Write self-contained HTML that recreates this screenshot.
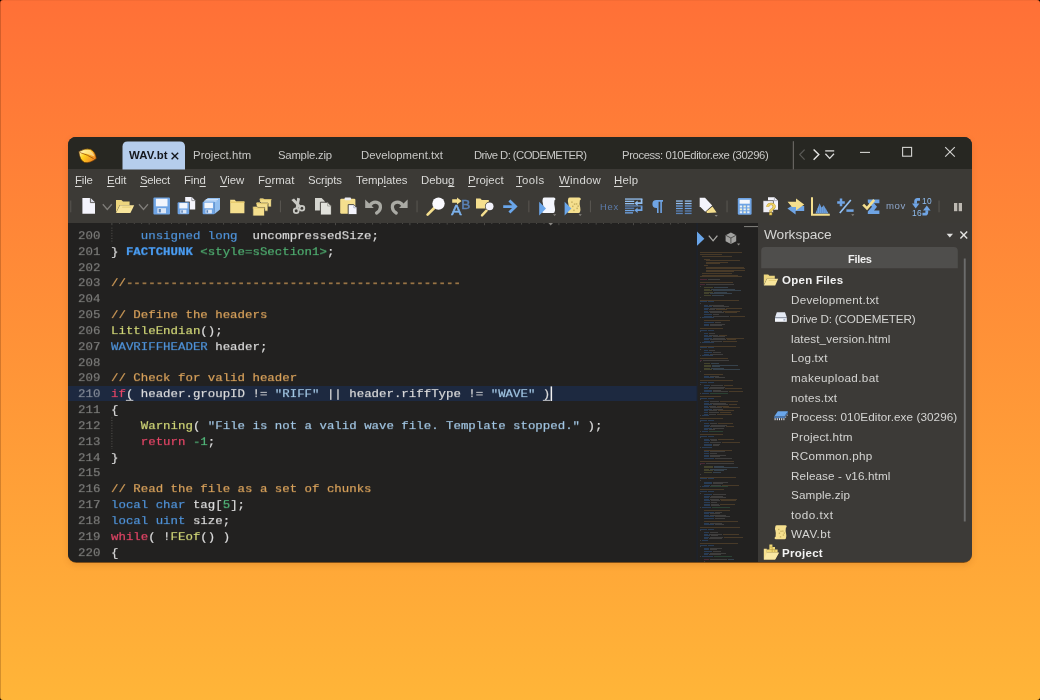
<!DOCTYPE html>
<html><head><meta charset="utf-8"><title>010 Editor</title>
<style>
html,body{margin:0;padding:0;}
body{width:1040px;height:700px;overflow:hidden;position:relative;background:#000;font-family:"Liberation Sans",sans-serif;}
.bg{position:absolute;left:0;top:0;width:1040px;height:700px;border-radius:3px;background:linear-gradient(180deg,rgb(255,112,55) 0%,rgb(255,181,56) 100%);}
.frame{position:absolute;left:67.6px;top:136.6px;width:904.5px;height:426.2px;border-radius:8.4px;background:rgba(40,18,4,.6);box-shadow:0 2px 6px rgba(130,60,0,.16);}
.clip{position:absolute;left:68px;top:137px;width:903.7px;height:425.4px;border-radius:8px;overflow:hidden;background:#3c3a37;}
.page{position:absolute;left:-68px;top:-137px;width:1040px;height:700px;}
.t,.ln,.cl{will-change:transform;}
.abs{position:absolute;}
.t{position:absolute;white-space:pre;line-height:20px;height:20px;font-family:"Liberation Sans",sans-serif;}
.t u{text-decoration:underline;text-underline-offset:1.5px;text-decoration-thickness:1px;}
.ln,.cl{position:absolute;white-space:pre;font-family:"Liberation Mono",monospace;font-size:12.4px;line-height:15.83px;height:15.83px;letter-spacing:0.0088px;}
.ln{left:77.6px;color:#7c7c7a;}
.ln,.cl{transform:scaleY(.885);transform-origin:0 11.21px;}
.cl{left:110.80px;color:#dcdcdc;}
.cl b{font-weight:700;}
.cl,.ln{-webkit-text-stroke:0.22px currentColor;}
.bm{text-decoration:underline;text-underline-offset:2.6px;text-decoration-thickness:1.1px;}
.mm{filter:blur(.3px);}
.mm i{position:absolute;height:1px;display:block;opacity:.5;}
svg{position:absolute;left:0;top:0;overflow:visible;}
</style></head><body>
<div class="bg"></div>
<div class="abs" style="left:0;top:0;width:1px;height:700px;background:rgba(60,20,0,.22);"></div>
<div class="abs" style="left:0;top:0;width:1040px;height:1px;background:rgba(60,20,0,.05);"></div>
<div class="frame"></div>
<div class="clip"><div class="page">
  <div class="abs" style="left:68px;top:137px;width:904px;height:32.4px;background:#272722;"></div>
  <div class="abs" style="left:68px;top:169.4px;width:904px;height:53.6px;background:#3c3a36;"></div>
  <div class="abs" style="left:68px;top:223.2px;width:690px;height:340px;background:#222120;"></div>
  <div class="abs" style="left:68px;top:385.5px;width:629px;height:15.3px;background:#1d2940;"></div>
  <div class="ln" style="top:228.90px;">200</div>
<div class="cl" style="top:228.90px">    <span style="color:#4f93da">unsigned long</span>  uncompressedSize;</div>
<div class="ln" style="top:244.73px;">201</div>
<div class="cl" style="top:244.73px">} <b style="color:#4a9df3">FACTCHUNK</b> <span style="color:#4fae70">&lt;style=sSection1&gt;</span>;</div>
<div class="ln" style="top:260.56px;">202</div>
<div class="ln" style="top:276.39px;">203</div>
<div class="cl" style="top:276.39px"><span style="color:#d9a25b">//---------------------------------------------</span></div>
<div class="ln" style="top:292.22px;">204</div>
<div class="ln" style="top:308.05px;">205</div>
<div class="cl" style="top:308.05px"><span style="color:#d9a25b">// Define the headers</span></div>
<div class="ln" style="top:323.88px;">206</div>
<div class="cl" style="top:323.88px"><span style="color:#cfd576">LittleEndian</span>();</div>
<div class="ln" style="top:339.71px;">207</div>
<div class="cl" style="top:339.71px"><span style="color:#4f93da">WAVRIFFHEADER</span> header;</div>
<div class="ln" style="top:355.54px;">208</div>
<div class="ln" style="top:371.37px;">209</div>
<div class="cl" style="top:371.37px"><span style="color:#d9a25b">// Check for valid header</span></div>
<div class="ln" style="top:387.20px;color:#838a96">210</div>
<div class="cl" style="top:387.20px"><span style="color:#e44566">if</span><span class="bm">(</span> header.groupID != <span style="color:#a2c6e3">"RIFF"</span> || header.riffType != <span style="color:#a2c6e3">"WAVE"</span> <span class="bm">)</span></div>
<div class="ln" style="top:403.03px;">211</div>
<div class="cl" style="top:403.03px">{</div>
<div class="ln" style="top:418.86px;">212</div>
<div class="cl" style="top:418.86px">    <span style="color:#cfd576">Warning</span>( <span style="color:#a2c6e3">"File is not a valid wave file. Template stopped."</span> );</div>
<div class="ln" style="top:434.69px;">213</div>
<div class="cl" style="top:434.69px">    <span style="color:#e44566">return</span> <span style="color:#52b87a">-1</span>;</div>
<div class="ln" style="top:450.52px;">214</div>
<div class="cl" style="top:450.52px">}</div>
<div class="ln" style="top:466.35px;">215</div>
<div class="ln" style="top:482.18px;">216</div>
<div class="cl" style="top:482.18px"><span style="color:#d9a25b">// Read the file as a set of chunks</span></div>
<div class="ln" style="top:498.01px;">217</div>
<div class="cl" style="top:498.01px"><span style="color:#4f93da">local char</span> tag[<span style="color:#52b87a">5</span>];</div>
<div class="ln" style="top:513.84px;">218</div>
<div class="cl" style="top:513.84px"><span style="color:#4f93da">local uint</span> size;</div>
<div class="ln" style="top:529.67px;">219</div>
<div class="cl" style="top:529.67px"><span style="color:#e44566">while</span>( !<span style="color:#cfd576">FEof</span>() )</div>
<div class="ln" style="top:545.50px;">220</div>
<div class="cl" style="top:545.50px">{</div>
  <div class="mm"><i style="left:699.6px;top:252.40px;width:42.8px;background:#6e5330"></i><i style="left:699.6px;top:253.98px;width:22.4px;background:#6e5330"></i><i style="left:701.6px;top:255.56px;width:30.6px;background:#6e5330"></i><i style="left:703.7px;top:258.72px;width:6.1px;background:#6e5330"></i><i style="left:705.7px;top:260.30px;width:34.7px;background:#6e5330"></i><i style="left:705.7px;top:261.88px;width:22.4px;background:#6e5330"></i><i style="left:705.7px;top:263.46px;width:14.3px;background:#6e5330"></i><i style="left:703.7px;top:265.04px;width:4.1px;background:#6e5330"></i><i style="left:705.7px;top:266.62px;width:38.8px;background:#6e5330"></i><i style="left:705.7px;top:268.20px;width:39.3px;background:#6e5330"></i><i style="left:705.7px;top:269.78px;width:39.3px;background:#6e5330"></i><i style="left:705.7px;top:271.36px;width:28.6px;background:#6e5330"></i><i style="left:701.6px;top:272.94px;width:30.6px;background:#6e5330"></i><i style="left:701.6px;top:274.52px;width:36.7px;background:#6e5330"></i><i style="left:699.6px;top:276.10px;width:42.8px;background:#6e5330"></i><i style="left:699.6px;top:279.26px;width:7.1px;background:#70324a"></i><i style="left:707.8px;top:279.26px;width:12.2px;background:#5c5c5a"></i><i style="left:699.6px;top:282.42px;width:33.7px;background:#6e5330"></i><i style="left:699.6px;top:284.00px;width:5.1px;background:#70324a"></i><i style="left:705.7px;top:284.00px;width:28.6px;background:#5c5c5a"></i><i style="left:699.6px;top:285.58px;width:1.0px;background:#5c5c5a"></i><i style="left:703.7px;top:287.16px;width:9.2px;background:#63663a"></i><i style="left:713.9px;top:287.16px;width:14.3px;background:#4a6478"></i><i style="left:703.7px;top:288.74px;width:6.1px;background:#63663a"></i><i style="left:710.8px;top:288.74px;width:24.5px;background:#4a6478"></i><i style="left:703.7px;top:290.32px;width:8.2px;background:#63663a"></i><i style="left:712.9px;top:290.32px;width:28.6px;background:#4a6478"></i><i style="left:703.7px;top:291.90px;width:9.2px;background:#63663a"></i><i style="left:713.9px;top:291.90px;width:13.3px;background:#4a6478"></i><i style="left:703.7px;top:293.48px;width:5.1px;background:#63663a"></i><i style="left:709.8px;top:293.48px;width:22.4px;background:#4a6478"></i><i style="left:703.7px;top:295.06px;width:7.1px;background:#63663a"></i><i style="left:711.8px;top:295.06px;width:12.2px;background:#4a6478"></i><i style="left:699.6px;top:296.64px;width:1.0px;background:#5c5c5a"></i><i style="left:699.6px;top:299.80px;width:39.8px;background:#6e5330"></i><i style="left:699.6px;top:301.38px;width:7.1px;background:#2f5788"></i><i style="left:707.8px;top:301.38px;width:6.1px;background:#2f5788"></i><i style="left:699.6px;top:302.96px;width:1.0px;background:#5c5c5a"></i><i style="left:703.7px;top:304.54px;width:4.1px;background:#2f5788"></i><i style="left:708.8px;top:304.54px;width:15.3px;background:#5c5c5a"></i><i style="left:703.7px;top:306.12px;width:8.2px;background:#2f5788"></i><i style="left:712.9px;top:306.12px;width:16.3px;background:#5c5c5a"></i><i style="left:703.7px;top:307.70px;width:5.1px;background:#2f5788"></i><i style="left:709.8px;top:307.70px;width:15.3px;background:#5c5c5a"></i><i style="left:726.1px;top:307.70px;width:16.3px;background:#6e5330"></i><i style="left:703.7px;top:309.28px;width:4.1px;background:#2f5788"></i><i style="left:708.8px;top:309.28px;width:6.1px;background:#5c5c5a"></i><i style="left:715.9px;top:309.28px;width:11.2px;background:#6e5330"></i><i style="left:703.7px;top:310.86px;width:4.1px;background:#2f5788"></i><i style="left:708.8px;top:310.86px;width:13.3px;background:#5c5c5a"></i><i style="left:723.1px;top:310.86px;width:17.3px;background:#6e5330"></i><i style="left:703.7px;top:312.44px;width:5.1px;background:#2f5788"></i><i style="left:709.8px;top:312.44px;width:14.3px;background:#5c5c5a"></i><i style="left:725.1px;top:312.44px;width:12.2px;background:#6e5330"></i><i style="left:703.7px;top:314.02px;width:8.2px;background:#2f5788"></i><i style="left:712.9px;top:314.02px;width:6.1px;background:#5c5c5a"></i><i style="left:703.7px;top:315.60px;width:8.2px;background:#2f5788"></i><i style="left:712.9px;top:315.60px;width:16.3px;background:#5c5c5a"></i><i style="left:730.2px;top:315.60px;width:14.8px;background:#6e5330"></i><i style="left:699.6px;top:317.18px;width:1.0px;background:#5c5c5a"></i><i style="left:701.6px;top:317.18px;width:12.2px;background:#2f5788"></i><i style="left:703.7px;top:320.34px;width:26.5px;background:#6e5330"></i><i style="left:703.7px;top:321.92px;width:10.2px;background:#2f5788"></i><i style="left:714.9px;top:321.92px;width:6.1px;background:#5c5c5a"></i><i style="left:703.7px;top:323.50px;width:5.1px;background:#2f5788"></i><i style="left:709.8px;top:323.50px;width:15.3px;background:#5c5c5a"></i><i style="left:703.7px;top:325.08px;width:5.1px;background:#2f5788"></i><i style="left:709.8px;top:325.08px;width:12.2px;background:#5c5c5a"></i><i style="left:699.6px;top:328.24px;width:23.5px;background:#6e5330"></i><i style="left:699.6px;top:329.82px;width:7.1px;background:#2f5788"></i><i style="left:707.8px;top:329.82px;width:6.1px;background:#2f5788"></i><i style="left:699.6px;top:331.40px;width:1.0px;background:#5c5c5a"></i><i style="left:703.7px;top:332.98px;width:4.1px;background:#2f5788"></i><i style="left:708.8px;top:332.98px;width:6.1px;background:#5c5c5a"></i><i style="left:703.7px;top:334.56px;width:4.1px;background:#2f5788"></i><i style="left:708.8px;top:334.56px;width:9.2px;background:#5c5c5a"></i><i style="left:719.0px;top:334.56px;width:8.2px;background:#6e5330"></i><i style="left:703.7px;top:336.14px;width:8.2px;background:#2f5788"></i><i style="left:712.9px;top:336.14px;width:12.2px;background:#5c5c5a"></i><i style="left:703.7px;top:337.72px;width:8.2px;background:#2f5788"></i><i style="left:712.9px;top:337.72px;width:12.2px;background:#5c5c5a"></i><i style="left:726.1px;top:337.72px;width:18.4px;background:#6e5330"></i><i style="left:703.7px;top:339.30px;width:5.1px;background:#2f5788"></i><i style="left:709.8px;top:339.30px;width:16.3px;background:#5c5c5a"></i><i style="left:727.1px;top:339.30px;width:9.2px;background:#6e5330"></i><i style="left:703.7px;top:340.88px;width:6.1px;background:#2f5788"></i><i style="left:710.8px;top:340.88px;width:11.2px;background:#5c5c5a"></i><i style="left:723.1px;top:340.88px;width:14.3px;background:#6e5330"></i><i style="left:699.6px;top:342.46px;width:1.0px;background:#5c5c5a"></i><i style="left:701.6px;top:342.46px;width:12.2px;background:#2f5788"></i><i style="left:699.6px;top:345.62px;width:36.7px;background:#6e5330"></i><i style="left:699.6px;top:347.20px;width:7.1px;background:#2f5788"></i><i style="left:707.8px;top:347.20px;width:6.1px;background:#2f5788"></i><i style="left:699.6px;top:348.78px;width:1.0px;background:#5c5c5a"></i><i style="left:703.7px;top:350.36px;width:4.1px;background:#2f5788"></i><i style="left:708.8px;top:350.36px;width:6.1px;background:#5c5c5a"></i><i style="left:703.7px;top:351.94px;width:8.2px;background:#2f5788"></i><i style="left:712.9px;top:351.94px;width:8.2px;background:#5c5c5a"></i><i style="left:703.7px;top:353.52px;width:5.1px;background:#2f5788"></i><i style="left:709.8px;top:353.52px;width:13.3px;background:#5c5c5a"></i><i style="left:699.6px;top:355.10px;width:1.0px;background:#5c5c5a"></i><i style="left:701.6px;top:355.10px;width:11.2px;background:#2f5788"></i><i style="left:699.6px;top:358.26px;width:28.6px;background:#6e5330"></i><i style="left:699.6px;top:359.84px;width:2.0px;background:#70324a"></i><i style="left:702.7px;top:359.84px;width:26.5px;background:#5c5c5a"></i><i style="left:699.6px;top:361.42px;width:1.0px;background:#5c5c5a"></i><i style="left:703.7px;top:363.00px;width:6.1px;background:#63663a"></i><i style="left:710.8px;top:363.00px;width:8.2px;background:#4a6478"></i><i style="left:703.7px;top:364.58px;width:7.1px;background:#63663a"></i><i style="left:711.8px;top:364.58px;width:26.5px;background:#4a6478"></i><i style="left:703.7px;top:366.16px;width:7.1px;background:#63663a"></i><i style="left:711.8px;top:366.16px;width:8.2px;background:#4a6478"></i><i style="left:703.7px;top:367.74px;width:6.1px;background:#63663a"></i><i style="left:710.8px;top:367.74px;width:13.3px;background:#4a6478"></i><i style="left:703.7px;top:369.32px;width:8.2px;background:#63663a"></i><i style="left:712.9px;top:369.32px;width:27.5px;background:#4a6478"></i><i style="left:699.6px;top:370.90px;width:1.0px;background:#5c5c5a"></i><i style="left:703.7px;top:374.06px;width:19.4px;background:#6e5330"></i><i style="left:703.7px;top:375.64px;width:5.1px;background:#2f5788"></i><i style="left:709.8px;top:375.64px;width:9.2px;background:#5c5c5a"></i><i style="left:703.7px;top:377.22px;width:10.2px;background:#2f5788"></i><i style="left:714.9px;top:377.22px;width:10.2px;background:#5c5c5a"></i><i style="left:699.6px;top:380.38px;width:33.7px;background:#6e5330"></i><i style="left:699.6px;top:381.96px;width:7.1px;background:#2f5788"></i><i style="left:707.8px;top:381.96px;width:6.1px;background:#2f5788"></i><i style="left:699.6px;top:383.54px;width:1.0px;background:#5c5c5a"></i><i style="left:703.7px;top:385.12px;width:6.1px;background:#2f5788"></i><i style="left:710.8px;top:385.12px;width:12.2px;background:#5c5c5a"></i><i style="left:724.1px;top:385.12px;width:9.2px;background:#6e5330"></i><i style="left:703.7px;top:386.70px;width:5.1px;background:#2f5788"></i><i style="left:709.8px;top:386.70px;width:15.3px;background:#5c5c5a"></i><i style="left:703.7px;top:388.28px;width:4.1px;background:#2f5788"></i><i style="left:708.8px;top:388.28px;width:15.3px;background:#5c5c5a"></i><i style="left:725.1px;top:388.28px;width:17.3px;background:#6e5330"></i><i style="left:703.7px;top:389.86px;width:8.2px;background:#2f5788"></i><i style="left:712.9px;top:389.86px;width:8.2px;background:#5c5c5a"></i><i style="left:703.7px;top:391.44px;width:8.2px;background:#2f5788"></i><i style="left:712.9px;top:391.44px;width:15.3px;background:#5c5c5a"></i><i style="left:729.2px;top:391.44px;width:14.3px;background:#6e5330"></i><i style="left:699.6px;top:393.02px;width:1.0px;background:#5c5c5a"></i><i style="left:701.6px;top:393.02px;width:7.1px;background:#2f5788"></i><i style="left:709.8px;top:393.02px;width:18.4px;background:#346246"></i><i style="left:699.6px;top:396.18px;width:21.4px;background:#6e5330"></i><i style="left:699.6px;top:397.76px;width:7.1px;background:#2f5788"></i><i style="left:707.8px;top:397.76px;width:6.1px;background:#2f5788"></i><i style="left:699.6px;top:399.34px;width:1.0px;background:#5c5c5a"></i><i style="left:703.7px;top:400.92px;width:5.1px;background:#2f5788"></i><i style="left:709.8px;top:400.92px;width:9.2px;background:#5c5c5a"></i><i style="left:720.0px;top:400.92px;width:18.4px;background:#6e5330"></i><i style="left:703.7px;top:402.50px;width:5.1px;background:#2f5788"></i><i style="left:709.8px;top:402.50px;width:16.3px;background:#5c5c5a"></i><i style="left:703.7px;top:404.08px;width:8.2px;background:#2f5788"></i><i style="left:712.9px;top:404.08px;width:15.3px;background:#5c5c5a"></i><i style="left:729.2px;top:404.08px;width:8.2px;background:#6e5330"></i><i style="left:703.7px;top:405.66px;width:4.1px;background:#2f5788"></i><i style="left:708.8px;top:405.66px;width:7.1px;background:#5c5c5a"></i><i style="left:716.9px;top:405.66px;width:12.2px;background:#6e5330"></i><i style="left:703.7px;top:407.24px;width:5.1px;background:#2f5788"></i><i style="left:709.8px;top:407.24px;width:12.2px;background:#5c5c5a"></i><i style="left:723.1px;top:407.24px;width:17.3px;background:#6e5330"></i><i style="left:703.7px;top:408.82px;width:8.2px;background:#2f5788"></i><i style="left:712.9px;top:408.82px;width:10.2px;background:#5c5c5a"></i><i style="left:703.7px;top:410.40px;width:4.1px;background:#2f5788"></i><i style="left:708.8px;top:410.40px;width:8.2px;background:#5c5c5a"></i><i style="left:718.0px;top:410.40px;width:16.3px;background:#6e5330"></i><i style="left:703.7px;top:411.98px;width:4.1px;background:#2f5788"></i><i style="left:708.8px;top:411.98px;width:10.2px;background:#5c5c5a"></i><i style="left:720.0px;top:411.98px;width:11.2px;background:#6e5330"></i><i style="left:703.7px;top:413.56px;width:4.1px;background:#2f5788"></i><i style="left:708.8px;top:413.56px;width:7.1px;background:#5c5c5a"></i><i style="left:716.9px;top:413.56px;width:15.3px;background:#6e5330"></i><i style="left:699.6px;top:415.14px;width:1.0px;background:#5c5c5a"></i><i style="left:701.6px;top:415.14px;width:7.1px;background:#2f5788"></i><i style="left:699.6px;top:418.30px;width:23.5px;background:#6e5330"></i><i style="left:699.6px;top:419.88px;width:7.1px;background:#2f5788"></i><i style="left:707.8px;top:419.88px;width:6.1px;background:#2f5788"></i><i style="left:699.6px;top:421.46px;width:1.0px;background:#5c5c5a"></i><i style="left:703.7px;top:423.04px;width:5.1px;background:#2f5788"></i><i style="left:709.8px;top:423.04px;width:7.1px;background:#5c5c5a"></i><i style="left:718.0px;top:423.04px;width:15.3px;background:#6e5330"></i><i style="left:703.7px;top:424.62px;width:6.1px;background:#2f5788"></i><i style="left:710.8px;top:424.62px;width:16.3px;background:#5c5c5a"></i><i style="left:703.7px;top:426.20px;width:5.1px;background:#2f5788"></i><i style="left:709.8px;top:426.20px;width:15.3px;background:#5c5c5a"></i><i style="left:726.1px;top:426.20px;width:8.2px;background:#6e5330"></i><i style="left:703.7px;top:427.78px;width:8.2px;background:#2f5788"></i><i style="left:712.9px;top:427.78px;width:11.2px;background:#5c5c5a"></i><i style="left:703.7px;top:429.36px;width:4.1px;background:#2f5788"></i><i style="left:708.8px;top:429.36px;width:6.1px;background:#5c5c5a"></i><i style="left:699.6px;top:430.94px;width:1.0px;background:#5c5c5a"></i><i style="left:701.6px;top:430.94px;width:6.1px;background:#2f5788"></i><i style="left:708.8px;top:430.94px;width:14.3px;background:#346246"></i><i style="left:699.6px;top:434.10px;width:23.5px;background:#6e5330"></i><i style="left:699.6px;top:435.68px;width:7.1px;background:#2f5788"></i><i style="left:707.8px;top:435.68px;width:6.1px;background:#2f5788"></i><i style="left:699.6px;top:437.26px;width:1.0px;background:#5c5c5a"></i><i style="left:703.7px;top:438.84px;width:5.1px;background:#2f5788"></i><i style="left:709.8px;top:438.84px;width:7.1px;background:#5c5c5a"></i><i style="left:718.0px;top:438.84px;width:16.3px;background:#6e5330"></i><i style="left:703.7px;top:440.42px;width:6.1px;background:#2f5788"></i><i style="left:710.8px;top:440.42px;width:6.1px;background:#5c5c5a"></i><i style="left:703.7px;top:442.00px;width:5.1px;background:#2f5788"></i><i style="left:709.8px;top:442.00px;width:11.2px;background:#5c5c5a"></i><i style="left:722.0px;top:442.00px;width:18.4px;background:#6e5330"></i><i style="left:703.7px;top:443.58px;width:8.2px;background:#2f5788"></i><i style="left:712.9px;top:443.58px;width:7.1px;background:#5c5c5a"></i><i style="left:703.7px;top:445.16px;width:8.2px;background:#2f5788"></i><i style="left:712.9px;top:445.16px;width:6.1px;background:#5c5c5a"></i><i style="left:699.6px;top:446.74px;width:1.0px;background:#5c5c5a"></i><i style="left:701.6px;top:446.74px;width:10.2px;background:#2f5788"></i><i style="left:703.7px;top:449.90px;width:28.6px;background:#6e5330"></i><i style="left:703.7px;top:451.48px;width:5.1px;background:#2f5788"></i><i style="left:709.8px;top:451.48px;width:15.3px;background:#5c5c5a"></i><i style="left:703.7px;top:453.06px;width:5.1px;background:#2f5788"></i><i style="left:709.8px;top:453.06px;width:7.1px;background:#5c5c5a"></i><i style="left:703.7px;top:454.64px;width:5.1px;background:#2f5788"></i><i style="left:709.8px;top:454.64px;width:16.3px;background:#5c5c5a"></i><i style="left:703.7px;top:456.22px;width:5.1px;background:#2f5788"></i><i style="left:709.8px;top:456.22px;width:10.2px;background:#5c5c5a"></i><i style="left:703.7px;top:457.80px;width:10.2px;background:#2f5788"></i><i style="left:714.9px;top:457.80px;width:17.3px;background:#5c5c5a"></i><i style="left:699.6px;top:460.96px;width:34.7px;background:#6e5330"></i><i style="left:699.6px;top:462.54px;width:5.1px;background:#70324a"></i><i style="left:705.7px;top:462.54px;width:28.6px;background:#5c5c5a"></i><i style="left:699.6px;top:464.12px;width:1.0px;background:#5c5c5a"></i><i style="left:703.7px;top:465.70px;width:9.2px;background:#63663a"></i><i style="left:713.9px;top:465.70px;width:10.2px;background:#4a6478"></i><i style="left:703.7px;top:467.28px;width:9.2px;background:#63663a"></i><i style="left:713.9px;top:467.28px;width:24.5px;background:#4a6478"></i><i style="left:703.7px;top:468.86px;width:5.1px;background:#63663a"></i><i style="left:709.8px;top:468.86px;width:17.3px;background:#4a6478"></i><i style="left:703.7px;top:470.44px;width:9.2px;background:#63663a"></i><i style="left:713.9px;top:470.44px;width:10.2px;background:#4a6478"></i><i style="left:703.7px;top:472.02px;width:8.2px;background:#63663a"></i><i style="left:712.9px;top:472.02px;width:8.2px;background:#4a6478"></i><i style="left:699.6px;top:473.60px;width:1.0px;background:#5c5c5a"></i><i style="left:699.6px;top:476.76px;width:36.7px;background:#6e5330"></i><i style="left:699.6px;top:478.34px;width:7.1px;background:#2f5788"></i><i style="left:707.8px;top:478.34px;width:6.1px;background:#2f5788"></i><i style="left:699.6px;top:479.92px;width:1.0px;background:#5c5c5a"></i><i style="left:703.7px;top:481.50px;width:8.2px;background:#2f5788"></i><i style="left:712.9px;top:481.50px;width:15.3px;background:#5c5c5a"></i><i style="left:703.7px;top:483.08px;width:8.2px;background:#2f5788"></i><i style="left:712.9px;top:483.08px;width:10.2px;background:#5c5c5a"></i><i style="left:703.7px;top:484.66px;width:6.1px;background:#2f5788"></i><i style="left:710.8px;top:484.66px;width:10.2px;background:#5c5c5a"></i><i style="left:722.0px;top:484.66px;width:17.3px;background:#6e5330"></i><i style="left:699.6px;top:486.24px;width:1.0px;background:#5c5c5a"></i><i style="left:701.6px;top:486.24px;width:7.1px;background:#2f5788"></i><i style="left:709.8px;top:486.24px;width:18.4px;background:#346246"></i><i style="left:699.6px;top:489.40px;width:24.5px;background:#6e5330"></i><i style="left:699.6px;top:490.98px;width:7.1px;background:#2f5788"></i><i style="left:707.8px;top:490.98px;width:6.1px;background:#2f5788"></i><i style="left:699.6px;top:492.56px;width:1.0px;background:#5c5c5a"></i><i style="left:703.7px;top:494.14px;width:8.2px;background:#2f5788"></i><i style="left:712.9px;top:494.14px;width:13.3px;background:#5c5c5a"></i><i style="left:703.7px;top:495.72px;width:6.1px;background:#2f5788"></i><i style="left:710.8px;top:495.72px;width:12.2px;background:#5c5c5a"></i><i style="left:703.7px;top:497.30px;width:5.1px;background:#2f5788"></i><i style="left:709.8px;top:497.30px;width:16.3px;background:#5c5c5a"></i><i style="left:703.7px;top:498.88px;width:5.1px;background:#2f5788"></i><i style="left:709.8px;top:498.88px;width:9.2px;background:#5c5c5a"></i><i style="left:720.0px;top:498.88px;width:17.3px;background:#6e5330"></i><i style="left:703.7px;top:500.46px;width:6.1px;background:#2f5788"></i><i style="left:710.8px;top:500.46px;width:9.2px;background:#5c5c5a"></i><i style="left:721.0px;top:500.46px;width:15.3px;background:#6e5330"></i><i style="left:703.7px;top:502.04px;width:6.1px;background:#2f5788"></i><i style="left:710.8px;top:502.04px;width:6.1px;background:#5c5c5a"></i><i style="left:703.7px;top:503.62px;width:6.1px;background:#2f5788"></i><i style="left:710.8px;top:503.62px;width:8.2px;background:#5c5c5a"></i><i style="left:720.0px;top:503.62px;width:15.3px;background:#6e5330"></i><i style="left:703.7px;top:505.20px;width:6.1px;background:#2f5788"></i><i style="left:710.8px;top:505.20px;width:9.2px;background:#5c5c5a"></i><i style="left:699.6px;top:506.78px;width:1.0px;background:#5c5c5a"></i><i style="left:701.6px;top:506.78px;width:9.2px;background:#2f5788"></i><i style="left:711.8px;top:506.78px;width:18.4px;background:#346246"></i><i style="left:703.7px;top:509.94px;width:26.5px;background:#6e5330"></i><i style="left:703.7px;top:511.52px;width:10.2px;background:#2f5788"></i><i style="left:714.9px;top:511.52px;width:7.1px;background:#5c5c5a"></i><i style="left:703.7px;top:513.10px;width:5.1px;background:#2f5788"></i><i style="left:709.8px;top:513.10px;width:10.2px;background:#5c5c5a"></i><i style="left:703.7px;top:514.68px;width:5.1px;background:#2f5788"></i><i style="left:709.8px;top:514.68px;width:16.3px;background:#5c5c5a"></i><i style="left:703.7px;top:516.26px;width:10.2px;background:#2f5788"></i><i style="left:714.9px;top:516.26px;width:15.3px;background:#5c5c5a"></i><i style="left:703.7px;top:517.84px;width:10.2px;background:#2f5788"></i><i style="left:714.9px;top:517.84px;width:10.2px;background:#5c5c5a"></i><i style="left:703.7px;top:521.00px;width:34.7px;background:#6e5330"></i><i style="left:703.7px;top:522.58px;width:5.1px;background:#2f5788"></i><i style="left:709.8px;top:522.58px;width:12.2px;background:#5c5c5a"></i><i style="left:703.7px;top:524.16px;width:10.2px;background:#2f5788"></i><i style="left:714.9px;top:524.16px;width:9.2px;background:#5c5c5a"></i><i style="left:699.6px;top:527.32px;width:40.8px;background:#6e5330"></i><i style="left:699.6px;top:528.90px;width:7.1px;background:#2f5788"></i><i style="left:707.8px;top:528.90px;width:6.1px;background:#2f5788"></i><i style="left:699.6px;top:530.48px;width:1.0px;background:#5c5c5a"></i><i style="left:703.7px;top:532.06px;width:5.1px;background:#2f5788"></i><i style="left:709.8px;top:532.06px;width:8.2px;background:#5c5c5a"></i><i style="left:703.7px;top:533.64px;width:4.1px;background:#2f5788"></i><i style="left:708.8px;top:533.64px;width:13.3px;background:#5c5c5a"></i><i style="left:723.1px;top:533.64px;width:16.3px;background:#6e5330"></i><i style="left:703.7px;top:535.22px;width:6.1px;background:#2f5788"></i><i style="left:710.8px;top:535.22px;width:7.1px;background:#5c5c5a"></i><i style="left:703.7px;top:536.80px;width:5.1px;background:#2f5788"></i><i style="left:709.8px;top:536.80px;width:13.3px;background:#5c5c5a"></i><i style="left:724.1px;top:536.80px;width:19.4px;background:#6e5330"></i><i style="left:703.7px;top:538.38px;width:4.1px;background:#2f5788"></i><i style="left:708.8px;top:538.38px;width:13.3px;background:#5c5c5a"></i><i style="left:699.6px;top:539.96px;width:1.0px;background:#5c5c5a"></i><i style="left:701.6px;top:539.96px;width:6.1px;background:#2f5788"></i><i style="left:699.6px;top:543.12px;width:38.8px;background:#6e5330"></i><i style="left:699.6px;top:544.70px;width:7.1px;background:#2f5788"></i><i style="left:707.8px;top:544.70px;width:6.1px;background:#2f5788"></i><i style="left:699.6px;top:546.28px;width:1.0px;background:#5c5c5a"></i><i style="left:703.7px;top:547.86px;width:5.1px;background:#2f5788"></i><i style="left:709.8px;top:547.86px;width:12.2px;background:#5c5c5a"></i><i style="left:703.7px;top:549.44px;width:5.1px;background:#2f5788"></i><i style="left:709.8px;top:549.44px;width:7.1px;background:#5c5c5a"></i><i style="left:703.7px;top:551.02px;width:8.2px;background:#2f5788"></i><i style="left:712.9px;top:551.02px;width:8.2px;background:#5c5c5a"></i><i style="left:703.7px;top:552.60px;width:5.1px;background:#2f5788"></i><i style="left:709.8px;top:552.60px;width:16.3px;background:#5c5c5a"></i><i style="left:703.7px;top:554.18px;width:4.1px;background:#2f5788"></i><i style="left:708.8px;top:554.18px;width:12.2px;background:#5c5c5a"></i><i style="left:699.6px;top:555.76px;width:1.0px;background:#5c5c5a"></i><i style="left:701.6px;top:555.76px;width:11.2px;background:#2f5788"></i><i style="left:713.9px;top:555.76px;width:18.4px;background:#346246"></i><i style="left:703.7px;top:558.92px;width:5.1px;background:#70324a"></i><i style="left:709.8px;top:558.92px;width:17.3px;background:#5c5c5a"></i><i style="left:728.2px;top:558.92px;width:6.1px;background:#4a6478"></i><i style="left:703.7px;top:560.50px;width:1.0px;background:#5c5c5a"></i></div>
  <svg width="1040" height="700" viewBox="0 0 1040 700"><defs><linearGradient id="lg" x1="0" y1="0.2" x2="1" y2="0.8"><stop offset="0" stop-color="#fff3b8"/><stop offset="0.35" stop-color="#ffd21e"/><stop offset="1" stop-color="#ee7a24"/></linearGradient></defs><path d="M78.8,151.6 Q85,147.6 90.6,149.2 Q95.6,151.8 96.4,158.4 Q90,163.6 84.6,162.6 Q79.6,160.4 78.8,151.6 Z" fill="url(#lg)" stroke="#5a3206" stroke-width="0.7"/><path d="M79.6,152.2 Q88,155 93.6,158.6" fill="none" stroke="#a0560c" stroke-width="0.9"/><path d="M79.6,152.4 Q85,149 90,150 Q93,152 94.5,156.5 Q88,153.4 79.6,152.4 Z" fill="#fff6cf" opacity=".55"/><path d="M122.5,169.6 V146.6 Q122.5,141.4 127.7,141.4 H179.8 Q185,141.4 185,146.6 V169.6 Z" fill="#b5cdec"/><path d="M171.6,152.8 L178.2,159.2 M178.2,152.8 L171.6,159.2" stroke="#14171d" stroke-width="1.35" fill="none"/><rect x="792.8" y="141.2" width="1.1" height="28.2" fill="#6d6b66"/><path d="M804.6,149.6 L799.8,154.6 L804.6,159.6" fill="none" stroke="#595955" stroke-width="1.3"/><path d="M813.6,149.4 L818.8,154.6 L813.6,159.8" fill="none" stroke="#e6e6e4" stroke-width="1.4"/><path d="M825.2,150.9 H834.2" stroke="#dcdcda" stroke-width="1.3"/><path d="M825.4,153.8 L829.7,158.4 L834,153.8" fill="none" stroke="#dcdcda" stroke-width="1.3"/><path d="M860,152.4 H870" stroke="#d4d4d2" stroke-width="1.1"/><rect x="902.6" y="147.4" width="9" height="8.8" fill="none" stroke="#d4d4d2" stroke-width="1.1"/><path d="M945.2,147.2 L954.8,156.6 M954.8,147.2 L945.2,156.6" stroke="#d4d4d2" stroke-width="1.15" fill="none"/><rect x="70.2" y="200.5" width="1.1" height="11.8" fill="#57544f"/><g transform="translate(82.4,198)"><path d="M0,0 H8 L12.6,4.6 V15.8 H0 Z" fill="#f4f4fc"/><path d="M8,0 V4.6 H12.6 Z" fill="#d6d6e2"/><path d="M8,0 V4.6 H12.6" fill="none" stroke="#55534f" stroke-width="0.9"/></g><path d="M102.8,204.2 l4.5,5.2 l4.5,-5.2" fill="none" stroke="#7f7d79" stroke-width="1.3"/><g transform="translate(116,199)"><path d="M0,1 H5.4 L7,2.6 H13.6 V6.2 H3.6 L0,13.6 Z" fill="#ecd57e"/><path d="M3.9,6.2 H18.2 L14.4,14 H0 Z" fill="#f8e59b"/><path d="M6.5,7.6 H15.6 L15,8.8 H5.9 Z" fill="#e9d27c"/></g><path d="M139.0,204.2 l4.5,5.2 l4.5,-5.2" fill="none" stroke="#7f7d79" stroke-width="1.3"/><rect x="153.4" y="197.6" width="16.6" height="16.8" rx="1" fill="#6fa4e4"/><rect x="155.89000000000001" y="198.77599999999998" width="11.620000000000001" height="7.5600000000000005" fill="#f2f5fc"/><rect x="157.38400000000001" y="208.184" width="8.632000000000001" height="5.04" fill="#dbe6f6"/><rect x="158.71200000000002" y="209.024" width="2.1580000000000004" height="3.3600000000000003" fill="#5a82b6"/><g transform="translate(177.6,197)"><path d="M7.6,0 H14.2 L17.6,3.6 V12.6 H7.6 Z" fill="#f4f4fc"/><path d="M14.2,0 V3.6 H17.6" fill="none" stroke="#7a7a80" stroke-width="0.7"/></g><rect x="177.0" y="201.6" width="12.8" height="13.2" fill="#3c3a36"/><rect x="177.6" y="202.2" width="11.6" height="12" rx="1" fill="#6fa4e4"/><rect x="179.34" y="203.04" width="8.12" height="5.4" fill="#f2f5fc"/><rect x="180.384" y="209.76" width="6.032" height="3.5999999999999996" fill="#dbe6f6"/><rect x="181.31199999999998" y="210.35999999999999" width="1.508" height="2.4000000000000004" fill="#5a82b6"/><g transform="translate(202.6,198)"><path d="M5.2,0 H17.4 V11.4 L12,16 V4.2 H0.6 Z" fill="#93bff0"/><path d="M3,1.6 H15.4 M1.6,3 H14" stroke="#e4eefb" stroke-width="0.8" fill="none"/></g><rect x="202.6" y="201.8" width="12.2" height="12.4" rx="1" fill="#6fa4e4"/><rect x="204.43" y="202.668" width="8.54" height="5.58" fill="#f2f5fc"/><rect x="205.528" y="209.61200000000002" width="6.343999999999999" height="3.7199999999999998" fill="#dbe6f6"/><rect x="206.504" y="210.232" width="1.5859999999999999" height="2.4800000000000004" fill="#5a82b6"/><path d="M230.2,199.8 h4.544 l1.42,1.704 h8.235999999999999 v11.695999999999998 h-14.2 z" fill="#f5df8e"/><rect x="230.2" y="201.50400000000002" width="14.2" height="1.42" fill="#e6cb6e"/><path d="M259.6,198.0 h3.7760000000000002 l1.1800000000000002,1.176 h6.844 v7.824 h-11.8 z" fill="#f5df8e" stroke="#3c3a36" stroke-width="0.8"/><rect x="259.6" y="199.176" width="11.8" height="0.9800000000000001" fill="#e6cb6e"/><path d="M256.2,202.0 h3.7760000000000002 l1.1800000000000002,1.2 h6.844 v7.999999999999999 h-11.8 z" fill="#f5df8e" stroke="#3c3a36" stroke-width="0.8"/><rect x="256.2" y="203.2" width="11.8" height="1.0" fill="#e6cb6e"/><path d="M252.8,206.20000000000002 h3.7760000000000002 l1.1800000000000002,1.272 h6.844 v8.527999999999999 h-11.8 z" fill="#f5df8e" stroke="#3c3a36" stroke-width="0.8"/><rect x="252.8" y="207.472" width="11.8" height="1.06" fill="#e6cb6e"/><rect x="279.9" y="200.5" width="1.1" height="11.8" fill="#57544f"/><g transform="translate(291,197.8)"><path d="M0.4,2.2 L3,0.6 L10.6,8.8 L8.6,10.8 Z" fill="#c9c9c4"/><path d="M6.2,0 L9,0.8 L7.2,10.8 L4.6,11.2 Z" fill="#c9c9c4"/><circle cx="5.2" cy="13" r="2.4" fill="none" stroke="#c9c9c4" stroke-width="1.8"/><circle cx="10.9" cy="10.5" r="2.4" fill="none" stroke="#c9c9c4" stroke-width="1.8"/></g><g transform="translate(315,198)"><path d="M0,0 H6.6 L10,3.4 V12.6 H0 Z" fill="#d6d6d0"/><path d="M5.4,4.2 H12.6 L16.4,8 V17 H5.4 Z" fill="#e2e2dc" stroke="#3c3a36" stroke-width="0.9"/><path d="M12.6,4.4 V8 H16.2" fill="none" stroke="#9c9c96" stroke-width="0.8"/></g><g transform="translate(340.2,197.6)"><rect x="0" y="1.2" width="15.2" height="15" rx="1.2" fill="#f5df8e"/><rect x="4.4" y="0" width="6.4" height="2.6" rx="0.8" fill="#ececf2"/><path d="M8,7 H13.6 L16.8,10.2 V17 H8 Z" fill="#f4f4fc" stroke="#3c3a36" stroke-width="0.9"/><path d="M13.6,7.2 V10.2 H16.6" fill="none" stroke="#9aa0b8" stroke-width="0.7"/></g><g transform="translate(365.2,199.2)"><path d="M5,5.8 C8.4,0.9 15.9,2.6 15.2,8.4 C14.9,10.9 13.2,12.8 11.4,13.8" fill="none" stroke="#aaaaa4" stroke-width="3.3" stroke-linecap="round"/><path d="M0,0.2 V8.9 H8.6 Z" fill="#aaaaa4"/></g><g transform="translate(407.6,199.2) scale(-1,1)"><path d="M5,5.8 C8.4,0.9 15.9,2.6 15.2,8.4 C14.9,10.9 13.2,12.8 11.4,13.8" fill="none" stroke="#aaaaa4" stroke-width="3.3" stroke-linecap="round"/><path d="M0,0.2 V8.9 H8.6 Z" fill="#aaaaa4"/></g><rect x="416.5" y="200.5" width="1.1" height="11.8" fill="#57544f"/><g transform="translate(426,197.2)"><path d="M8.2,10.8 L1.6,17.4" stroke="#f5df8e" stroke-width="2.7" stroke-linecap="round"/><circle cx="12.5" cy="6.4" r="6.2" fill="#fafaff"/></g><g transform="translate(452,197.4)"><path d="M0.2,1.9 H5 V0 L9.6,3.6 L5,7.2 V5.3 H0.2 Z" fill="#f5df8e"/><text x="9.2" y="11.9" font-family="Liberation Sans" font-size="13.6" fill="#5a82b6" stroke="#5a82b6" stroke-width="0.5">B</text><text x="-0.7" y="17.3" font-family="Liberation Sans" font-size="15.4" fill="#7db2ec" stroke="#7db2ec" stroke-width="0.6">A</text></g><g transform="translate(476,198)"><path d="M0,0.6 H4.4 L5.8,2 H12.8 V10.6 H0 Z" fill="#f5df8e"/><path d="M11.4,11.6 L6,17.4" stroke="#f5df8e" stroke-width="2.4" stroke-linecap="round"/><circle cx="13.6" cy="8.3" r="4.6" fill="#3c3a36"/><circle cx="13.6" cy="8.3" r="3.9" fill="#f2f2fa"/></g><g transform="translate(502.4,199.4)"><path d="M0.8,7.2 H12 M7,1.2 L13.2,7.2 L7,13.2" fill="none" stroke="#6aa6ea" stroke-width="2.8" stroke-linejoin="miter"/></g><rect x="528.3" y="200.5" width="1.1" height="11.8" fill="#57544f"/><path d="M542.8000000000001,198.8 q0.2,-1.4 1.8,-1.4 h9.2 q1.6,0 1.6,1.5 q-0.1,1.1 -0.9,1.3 q-0.7,3.6 0.3,7 q0.6,2.4 -0.2,4.8 q-0.3,1 -1.5,1 h-9.6 q-1.7,0 -1.5,-1.5 q0.3,-1 1.1,-1.2 q0.7,-3.8 -0.3,-7.2 q-0.7,-2 0,-4.3 z" fill="#f4f6fd"/><path d="M539.2,201.8 V215.4 L546,208.6 Z" fill="#6aa6ea"/><path d="M553,214.2 h3.2 l-1.6,1.8 z" fill="#8a8884"/><path d="M568.2,198.8 q0.2,-1.4 1.8,-1.4 h9.2 q1.6,0 1.6,1.5 q-0.1,1.1 -0.9,1.3 q-0.7,3.6 0.3,7 q0.6,2.4 -0.2,4.8 q-0.3,1 -1.5,1 h-9.6 q-1.7,0 -1.5,-1.5 q0.3,-1 1.1,-1.2 q0.7,-3.8 -0.3,-7.2 q-0.7,-2 0,-4.3 z" fill="#f5df8e"/><rect x="571.2" y="201.4" width="1.5" height="1.5" fill="#c9b262"/><rect x="575.8000000000001" y="203.20000000000002" width="1.5" height="1.5" fill="#c9b262"/><rect x="572.0" y="205.6" width="1.5" height="1.5" fill="#c9b262"/><rect x="576.4" y="207.6" width="1.5" height="1.5" fill="#c9b262"/><rect x="573.2" y="209.6" width="1.5" height="1.5" fill="#c9b262"/><rect x="577.4" y="205.4" width="1.5" height="1.5" fill="#c9b262"/><rect x="573.8000000000001" y="203.4" width="1.5" height="1.5" fill="#c9b262"/><path d="M564.6,201.8 V215.4 L571.4,208.6 Z" fill="#6aa6ea"/><path d="M578.6,214.2 h3.2 l-1.6,1.8 z" fill="#8a8884"/><rect x="589.9" y="200.5" width="1.1" height="11.8" fill="#57544f"/><g transform="translate(625,198.2)"><rect x="0" y="0.2" width="17.4" height="1.3" fill="#93bff0"/><rect x="0" y="2.5" width="9.2" height="1.3" fill="#93bff0"/><rect x="0" y="4.8" width="9.2" height="1.3" fill="#93bff0"/><rect x="0" y="7.1" width="17.4" height="1.3" fill="#5a82b6"/><rect x="0" y="9.4" width="9.2" height="1.3" fill="#5a82b6"/><rect x="0" y="11.7" width="9.2" height="1.3" fill="#6fa4e4"/><rect x="0" y="14.0" width="8.0" height="1.3" fill="#6fa4e4"/><path d="M16.6,0.8 V5 H11.6" fill="none" stroke="#93bff0" stroke-width="1.7"/><path d="M12.6,2.2 L9.4,5 L12.6,7.8 Z" fill="#93bff0"/><path d="M16.6,8 V12 H11.6" fill="none" stroke="#6fa4e4" stroke-width="1.7"/><path d="M12.6,9.2 L9.4,12 L12.6,14.8 Z" fill="#6fa4e4"/></g><g transform="translate(652,200)"><path d="M4.4,0 H11 V1.7 H9.9 V13 H8.3 V1.7 H6.6 V13 H5 V8 H4.4 A4,4 0 0 1 4.4,0 Z" fill="#6fa4e4"/></g><g transform="translate(676,200)"><rect x="0" y="0.40" width="6.8" height="1.3" fill="#93bff0"/><rect x="8.8" y="0.40" width="6.8" height="1.3" fill="#93bff0"/><rect x="0" y="2.88" width="6.8" height="1.3" fill="#93bff0"/><rect x="8.8" y="2.88" width="6.8" height="1.3" fill="#93bff0"/><rect x="0" y="5.36" width="6.8" height="1.3" fill="#6fa4e4"/><rect x="8.8" y="5.36" width="6.8" height="1.3" fill="#6fa4e4"/><rect x="0" y="7.84" width="6.8" height="1.3" fill="#6fa4e4"/><rect x="8.8" y="7.84" width="6.8" height="1.3" fill="#6fa4e4"/><rect x="0" y="10.32" width="6.8" height="1.3" fill="#5a82b6"/><rect x="8.8" y="10.32" width="6.8" height="1.3" fill="#5a82b6"/><rect x="0" y="12.80" width="6.8" height="1.3" fill="#5a82b6"/><rect x="8.8" y="12.80" width="6.8" height="1.3" fill="#5a82b6"/></g><g transform="translate(699.4,197.2)"><path d="M0.3,0.5 H5.6 L12.8,8.4 L5.8,14.6 L0.3,9 Z" fill="#f4f4fc"/><path d="M6.9,14.2 L13.1,9.2 L17.2,15.4 L7.6,15.8 Z" fill="#f5df8e"/></g><path d="M714.6,215 h3.2 l-1.6,1.8 z" fill="#8a8884"/><rect x="726.5" y="200.5" width="1.1" height="11.8" fill="#57544f"/><g transform="translate(737.8,198)"><rect x="0" y="0" width="13.8" height="16.8" rx="1.2" fill="#6fa4e4"/><rect x="1.8" y="1.8" width="10.2" height="3.9" fill="#f4f7fd"/><rect x="2.00" y="7.50" width="2.3" height="1.9" fill="#e9f1fc"/><rect x="5.70" y="7.50" width="2.3" height="1.9" fill="#f3f0d2"/><rect x="9.40" y="7.50" width="2.3" height="1.9" fill="#e9f1fc"/><rect x="2.00" y="10.40" width="2.3" height="1.9" fill="#f3f0d2"/><rect x="5.70" y="10.40" width="2.3" height="1.9" fill="#e9f1fc"/><rect x="9.40" y="10.40" width="2.3" height="1.9" fill="#f3f0d2"/><rect x="2.00" y="13.30" width="2.3" height="1.9" fill="#e9f1fc"/><rect x="5.70" y="13.30" width="2.3" height="1.9" fill="#f3f0d2"/><rect x="9.40" y="13.30" width="2.3" height="1.9" fill="#e9f1fc"/></g><g transform="translate(763,197.2)"><path d="M5,0 H11.4 L15,3.4 V12.6 H5 Z" fill="#f4f4fc"/><path d="M11.4,0.2 V3.4 H14.8" fill="none" stroke="#9a9aa6" stroke-width="0.7"/><path d="M0,3.4 H10.4 V15.4 H0 Z" fill="#eeeef6" stroke="#3c3a36" stroke-width="0.7"/><text x="2.7" y="18.3" font-family="Liberation Sans" font-weight="700" font-size="17.4" fill="#f2d566" stroke="#b8962e" stroke-width="0.45">?</text></g><g transform="translate(787,198.4)"><path d="M17.2,7.6 V12.6 H8.6 V16 L0.4,10.2 L8.6,5.4 V7.6 Z" fill="#6fa4e4"/><path d="M0.6,3.4 H9 V0 L17.2,6 L9,12 V8.6 H5 L0.6,3.4 Z" fill="#f5df8e"/></g><g transform="translate(811,197.2)"><path d="M4.4,16.4 L8.6,6.2 L10.6,10.6 L12.6,8 L17.6,16.4 Z" fill="#6fa4e4"/><path d="M6.5,11 V16.4 M8.6,6.6 V16.4 M10.7,10.8 V16.4 M12.8,8.6 V16.4 M14.9,12 V16.4" stroke="#5a82b6" stroke-width="0.7"/><path d="M1,0 V17.6 H18.8" fill="none" stroke="#f5df8e" stroke-width="2"/></g><g transform="translate(837,198.4)"><path d="M0.2,4 H7.8 M4,0.2 V7.8" stroke="#6fa4e4" stroke-width="2.5"/><path d="M13.8,1.6 L2.8,14.6" stroke="#93bff0" stroke-width="1.7"/><path d="M9.4,12.2 H16.6" stroke="#6fa4e4" stroke-width="2.5"/></g><path d="M851.2,214.2 h3.2 l-1.6,1.8 z" fill="#8a8884"/><g transform="translate(862.4,199)"><path d="M5.4,0.6 H17 V4.2 H11.6 L14.6,7.8 L11.6,11.4 H17 V15 H5.4 V12.4 L9.6,7.8 L5.4,3.2 Z" fill="#6fa4e4"/><path d="M0.8,5.6 L4.6,9.4 L11.8,0.8" fill="none" stroke="#f5df8e" stroke-width="2.6"/></g><g transform="translate(912,197.8)"><path d="M8,1.6 H5.4 Q3.6,1.6 3.6,3.6 V6" fill="none" stroke="#6fa4e4" stroke-width="2.8"/><path d="M0,5.6 H7.4 L3.7,10.6 Z" fill="#6fa4e4"/><path d="M10.4,16.4 H13 Q14.8,16.4 14.8,14.4 V12.4" fill="none" stroke="#6fa4e4" stroke-width="2.8"/><path d="M11,12.8 H18.6 L14.8,7.6 Z" fill="#6fa4e4"/></g><rect x="938.5" y="200.5" width="1.1" height="11.8" fill="#57544f"/><rect x="954" y="203" width="3.3" height="8.2" fill="#bdb9b2"/><rect x="958.7" y="203" width="3.3" height="8.2" fill="#bdb9b2"/><rect x="111.50" y="223" width="0.8" height="2.2" fill="#55534f"/><rect x="118.95" y="223" width="0.8" height="1.0" fill="#55534f"/><rect x="126.40" y="223" width="0.8" height="1.0" fill="#55534f"/><rect x="133.85" y="223" width="0.8" height="1.0" fill="#55534f"/><rect x="141.30" y="223" width="0.8" height="1.0" fill="#55534f"/><rect x="148.75" y="223" width="0.8" height="1.6" fill="#55534f"/><rect x="156.20" y="223" width="0.8" height="1.0" fill="#55534f"/><rect x="163.65" y="223" width="0.8" height="1.0" fill="#55534f"/><rect x="171.10" y="223" width="0.8" height="1.0" fill="#55534f"/><rect x="178.55" y="223" width="0.8" height="1.0" fill="#55534f"/><rect x="186.00" y="223" width="0.8" height="2.2" fill="#55534f"/><rect x="193.45" y="223" width="0.8" height="1.0" fill="#55534f"/><rect x="200.90" y="223" width="0.8" height="1.0" fill="#55534f"/><rect x="208.35" y="223" width="0.8" height="1.0" fill="#55534f"/><rect x="215.80" y="223" width="0.8" height="1.0" fill="#55534f"/><rect x="223.25" y="223" width="0.8" height="1.6" fill="#55534f"/><rect x="230.70" y="223" width="0.8" height="1.0" fill="#55534f"/><rect x="238.15" y="223" width="0.8" height="1.0" fill="#55534f"/><rect x="245.60" y="223" width="0.8" height="1.0" fill="#55534f"/><rect x="253.05" y="223" width="0.8" height="1.0" fill="#55534f"/><rect x="260.50" y="223" width="0.8" height="2.2" fill="#55534f"/><rect x="267.95" y="223" width="0.8" height="1.0" fill="#55534f"/><rect x="275.40" y="223" width="0.8" height="1.0" fill="#55534f"/><rect x="282.85" y="223" width="0.8" height="1.0" fill="#55534f"/><rect x="290.30" y="223" width="0.8" height="1.0" fill="#55534f"/><rect x="297.75" y="223" width="0.8" height="1.6" fill="#55534f"/><rect x="305.20" y="223" width="0.8" height="1.0" fill="#55534f"/><rect x="312.65" y="223" width="0.8" height="1.0" fill="#55534f"/><rect x="320.10" y="223" width="0.8" height="1.0" fill="#55534f"/><rect x="327.55" y="223" width="0.8" height="1.0" fill="#55534f"/><rect x="335.00" y="223" width="0.8" height="2.2" fill="#55534f"/><rect x="342.45" y="223" width="0.8" height="1.0" fill="#55534f"/><rect x="349.90" y="223" width="0.8" height="1.0" fill="#55534f"/><rect x="357.35" y="223" width="0.8" height="1.0" fill="#55534f"/><rect x="364.80" y="223" width="0.8" height="1.0" fill="#55534f"/><rect x="372.25" y="223" width="0.8" height="1.6" fill="#55534f"/><rect x="379.70" y="223" width="0.8" height="1.0" fill="#55534f"/><rect x="387.15" y="223" width="0.8" height="1.0" fill="#55534f"/><rect x="394.60" y="223" width="0.8" height="1.0" fill="#55534f"/><rect x="402.05" y="223" width="0.8" height="1.0" fill="#55534f"/><rect x="409.50" y="223" width="0.8" height="2.2" fill="#55534f"/><rect x="416.95" y="223" width="0.8" height="1.0" fill="#55534f"/><rect x="424.40" y="223" width="0.8" height="1.0" fill="#55534f"/><rect x="431.85" y="223" width="0.8" height="1.0" fill="#55534f"/><rect x="439.30" y="223" width="0.8" height="1.0" fill="#55534f"/><rect x="446.75" y="223" width="0.8" height="1.6" fill="#55534f"/><rect x="454.20" y="223" width="0.8" height="1.0" fill="#55534f"/><rect x="461.65" y="223" width="0.8" height="1.0" fill="#55534f"/><rect x="469.10" y="223" width="0.8" height="1.0" fill="#55534f"/><rect x="476.55" y="223" width="0.8" height="1.0" fill="#55534f"/><rect x="484.00" y="223" width="0.8" height="2.2" fill="#55534f"/><rect x="491.45" y="223" width="0.8" height="1.0" fill="#55534f"/><rect x="498.90" y="223" width="0.8" height="1.0" fill="#55534f"/><rect x="506.35" y="223" width="0.8" height="1.0" fill="#55534f"/><rect x="513.80" y="223" width="0.8" height="1.0" fill="#55534f"/><rect x="521.25" y="223" width="0.8" height="1.6" fill="#55534f"/><rect x="528.70" y="223" width="0.8" height="1.0" fill="#55534f"/><rect x="536.15" y="223" width="0.8" height="1.0" fill="#55534f"/><rect x="543.60" y="223" width="0.8" height="1.0" fill="#55534f"/><rect x="551.05" y="223" width="0.8" height="1.0" fill="#55534f"/><rect x="558.50" y="223" width="0.8" height="2.2" fill="#55534f"/><rect x="565.95" y="223" width="0.8" height="1.0" fill="#55534f"/><rect x="573.40" y="223" width="0.8" height="1.0" fill="#55534f"/><rect x="580.85" y="223" width="0.8" height="1.0" fill="#55534f"/><rect x="588.30" y="223" width="0.8" height="1.0" fill="#55534f"/><rect x="595.75" y="223" width="0.8" height="1.6" fill="#55534f"/><rect x="603.20" y="223" width="0.8" height="1.0" fill="#55534f"/><rect x="610.65" y="223" width="0.8" height="1.0" fill="#55534f"/><rect x="618.10" y="223" width="0.8" height="1.0" fill="#55534f"/><rect x="625.55" y="223" width="0.8" height="1.0" fill="#55534f"/><rect x="633.00" y="223" width="0.8" height="2.2" fill="#55534f"/><rect x="640.45" y="223" width="0.8" height="1.0" fill="#55534f"/><rect x="647.90" y="223" width="0.8" height="1.0" fill="#55534f"/><rect x="655.35" y="223" width="0.8" height="1.0" fill="#55534f"/><rect x="662.80" y="223" width="0.8" height="1.0" fill="#55534f"/><rect x="670.25" y="223" width="0.8" height="1.6" fill="#55534f"/><rect x="677.70" y="223" width="0.8" height="1.0" fill="#55534f"/><rect x="685.15" y="223" width="0.8" height="1.0" fill="#55534f"/><path d="M548.4,223 h4.6 l-2.3,2.4 z" fill="#8a8884"/><path d="M111.9,227.6 V243.4" stroke="#55534f" stroke-width="1" stroke-dasharray="1,1.6"/><path d="M111.9,417.4 V449" stroke="#55534f" stroke-width="1" stroke-dasharray="1,1.6"/><rect x="550.6" y="386.4" width="1.5" height="14.6" fill="#f2f2f2"/><rect x="696.6" y="223" width="0.9" height="340" fill="#1b2434"/><path d="M697,231.6 V245.8 L704.4,238.7 Z" fill="#6aa6ea"/><path d="M708.8,235.6 l4.3,5.2 l4.3,-5.2" fill="none" stroke="#aaa9a6" stroke-width="1.3"/><g transform="translate(725.6,232.4)"><path d="M5.3,0 L10.6,2.8 V8.8 L5.3,11.6 L0,8.8 V2.8 Z" fill="#a2a2a0"/><path d="M0.4,3 L5.3,5.6 L10.2,3 M5.3,5.6 V11.2" fill="none" stroke="#3a3a38" stroke-width="0.8"/></g><path d="M737,243.6 h3.2 l-1.6,1.8 z" fill="#8a8884"/><rect x="744" y="226" width="14" height="1.1" fill="#7b7a76"/><path d="M946.6,233.8 h6.4 l-3.2,3.6 z" fill="#e0e0de"/><path d="M960.4,231.4 L967.2,238.4 M967.2,231.4 L960.4,238.4" stroke="#e4e4e2" stroke-width="1.4" fill="none"/><path d="M761.2,268.2 V251 Q761.2,247 765.2,247 H953.8 Q957.8,247 957.8,251 V268.2 Z" fill="#4f4e4c"/><rect x="963.8" y="258.5" width="1.9" height="263" fill="#6b6c6c"/><g transform="translate(763.8,273.6)"><path d="M0,0.8 H4.4 L5.6,2.2 H11 V5.2 H3 L0,11.4 Z" fill="#ecd57e"/><path d="M3.2,5.2 H14.4 L11.4,11.8 H0 Z" fill="#f8e59b"/><path d="M5.2,6.4 H12.6 L12.1,7.4 H4.7 Z" fill="#e9d27c"/></g><g transform="translate(775,312.2)"><path d="M1.8,0 H10 L11.8,5.4 H0 Z" fill="#e4e9f4"/><rect x="0" y="5.8" width="11.8" height="3.8" fill="#f4f6fc"/><rect x="0" y="5.3" width="11.8" height="0.8" fill="#9aa6c0"/><rect x="8.4" y="7.2" width="2" height="1" fill="#7a88a8"/></g><g transform="translate(773.8,411.2)"><path d="M4,0 H14.2 L10.6,5.2 H0.4 Z" fill="#6aa6ea"/><path d="M0.4,5.2 H10.6 L14.2,0 V1.8 L10.6,7 H0.4 Z" fill="#4a78b4"/><rect x="0.8" y="7" width="1" height="2" fill="#e8ecf6"/><rect x="3.0" y="7" width="1" height="2" fill="#e8ecf6"/><rect x="5.2" y="7" width="1" height="2" fill="#e8ecf6"/><rect x="7.4" y="7" width="1" height="2" fill="#e8ecf6"/><rect x="9.600000000000001" y="7" width="1" height="2" fill="#e8ecf6"/><path d="M11.4,6.4 l0.9,-1.3 v1.8z M12.8,4.4 l0.9,-1.3 v1.8z" fill="#e8ecf6"/></g><g transform="translate(773.9,525.2)"><g transform="scale(0.9,0.9)"><path d="M1.6,1.4 q0.2,-1.4 1.8,-1.4 h9.2 q1.6,0 1.6,1.5 q-0.1,1.1 -0.9,1.3 q-0.7,3.6 0.3,7 q0.6,2.4 -0.2,4.8 q-0.3,1 -1.5,1 h-9.6 q-1.7,0 -1.5,-1.5 q0.3,-1 1.1,-1.2 q0.7,-3.8 -0.3,-7.2 q-0.7,-2 0,-4.3 z" fill="#f5df8e"/><rect x="4.6" y="4.0" width="1.5" height="1.5" fill="#c9b262"/><rect x="9.2" y="5.8" width="1.5" height="1.5" fill="#c9b262"/><rect x="5.4" y="8.2" width="1.5" height="1.5" fill="#c9b262"/><rect x="9.8" y="10.2" width="1.5" height="1.5" fill="#c9b262"/><rect x="6.6" y="12.2" width="1.5" height="1.5" fill="#c9b262"/><rect x="10.8" y="8.0" width="1.5" height="1.5" fill="#c9b262"/><rect x="7.2" y="6.0" width="1.5" height="1.5" fill="#c9b262"/></g></g><g transform="translate(763.8,544.4)"><path d="M5.6,0 h3 v2.6 h2.6 v2.6 h2.6 v3 h-11 v-3 h2.8 z" fill="#f0d978"/><path d="M5.6,2.6 h3 M5.6,5.2 h5.6 M8.4,2.6 v5.6 M11,5.2 v3" stroke="#b89a3c" stroke-width="0.6" fill="none"/><path d="M0,4.4 H3 V8 H15 L11.2,15 H0 Z" fill="#f5df8e"/><path d="M3.2,8.4 H15.2 L11.4,15 H0 Z" fill="#f9e8a4"/></g></svg>
  <div class="t" id="t0" style="left:128.92px;top:145.05px;font-size:11.4px;color:#14171d;font-weight:700;letter-spacing:0.133px">WAV.bt</div>
<div class="t" id="t1" style="left:193.12px;top:145.08px;font-size:11.3px;color:#c8c8c6;font-weight:400;letter-spacing:0.092px">Project.htm</div>
<div class="t" id="t2" style="left:277.62px;top:145.08px;font-size:11.3px;color:#c8c8c6;font-weight:400;letter-spacing:-0.203px">Sample.zip</div>
<div class="t" id="t3" style="left:361.32px;top:145.08px;font-size:11.3px;color:#c8c8c6;font-weight:400;letter-spacing:0.021px">Development.txt</div>
<div class="t" id="t4" style="left:473.92px;top:145.08px;font-size:11.3px;color:#c8c8c6;font-weight:400;letter-spacing:-0.564px">Drive D: (CODEMETER)</div>
<div class="t" id="t5" style="left:621.92px;top:145.08px;font-size:11.3px;color:#c8c8c6;font-weight:400;letter-spacing:-0.396px">Process: 010Editor.exe (30296)</div>
<div class="t" id="t6" style="left:74.92px;top:170.15px;font-size:11.4px;color:#d9d9d7;font-weight:400;letter-spacing:-0.152px"><u>F</u>ile</div>
<div class="t" id="t7" style="left:106.92px;top:170.15px;font-size:11.4px;color:#d9d9d7;font-weight:400;letter-spacing:-0.093px"><u>E</u>dit</div>
<div class="t" id="t8" style="left:139.92px;top:170.15px;font-size:11.4px;color:#d9d9d7;font-weight:400;letter-spacing:-0.317px"><u>S</u>elect</div>
<div class="t" id="t9" style="left:183.92px;top:170.15px;font-size:11.4px;color:#d9d9d7;font-weight:400;letter-spacing:-0.101px">Fin<u>d</u></div>
<div class="t" id="t10" style="left:219.92px;top:170.15px;font-size:11.4px;color:#d9d9d7;font-weight:400;letter-spacing:-0.058px"><u>V</u>iew</div>
<div class="t" id="t11" style="left:258.12px;top:170.15px;font-size:11.4px;color:#d9d9d7;font-weight:400;letter-spacing:0.043px">F<u>o</u>rmat</div>
<div class="t" id="t12" style="left:308.12px;top:170.15px;font-size:11.4px;color:#d9d9d7;font-weight:400;letter-spacing:-0.137px">Scr<u>i</u>pts</div>
<div class="t" id="t13" style="left:355.62px;top:170.15px;font-size:11.4px;color:#d9d9d7;font-weight:400;letter-spacing:-0.062px">Temp<u>l</u>ates</div>
<div class="t" id="t14" style="left:421.12px;top:170.15px;font-size:11.4px;color:#d9d9d7;font-weight:400;letter-spacing:-0.042px">Debu<u>g</u></div>
<div class="t" id="t15" style="left:468.12px;top:170.15px;font-size:11.4px;color:#d9d9d7;font-weight:400;letter-spacing:0.014px"><u>P</u>roject</div>
<div class="t" id="t16" style="left:516.32px;top:170.15px;font-size:11.4px;color:#d9d9d7;font-weight:400;letter-spacing:0.412px"><u>T</u>ools</div>
<div class="t" id="t17" style="left:558.62px;top:170.15px;font-size:11.4px;color:#d9d9d7;font-weight:400;letter-spacing:0.256px"><u>W</u>indow</div>
<div class="t" id="t18" style="left:614.32px;top:170.15px;font-size:11.4px;color:#d9d9d7;font-weight:400;letter-spacing:0.233px"><u>H</u>elp</div>
<div class="t" id="t19" style="left:599.64px;top:196.54px;font-size:9.4px;color:#5c7cab;font-weight:400;letter-spacing:0.752px">Hex</div>
<div class="t" id="t20" style="left:885.82px;top:196.47px;font-size:9.6px;color:#8ea7cc;font-weight:400;letter-spacing:0.542px">mov</div>
<div class="t" id="t21" style="left:921.50px;top:190.89px;font-size:8.4px;color:#8fbdf0;font-weight:400;letter-spacing:0.340px">10</div>
<div class="t" id="t22" style="left:911.90px;top:202.89px;font-size:8.4px;color:#8fbdf0;font-weight:400;letter-spacing:0.240px">16</div>
<div class="t" id="t23" style="left:764.28px;top:224.65px;font-size:13.7px;color:#d6d6d4;font-weight:400;letter-spacing:-0.075px">Workspace</div>
<div class="t" id="t24" style="left:848.24px;top:248.69px;font-size:11.0px;color:#f0f0f0;font-weight:700;letter-spacing:-0.292px">Files</div>
<div class="t" id="t25" style="left:781.51px;top:269.71px;font-size:11.5px;color:#f2f2f2;font-weight:700;letter-spacing:0.258px">Open Files</div>
<div class="t" id="t26" style="left:790.80px;top:289.79px;font-size:11.7px;color:#d4d4d2;font-weight:400;letter-spacing:0.243px">Development.txt</div>
<div class="t" id="t27" style="left:790.80px;top:309.34px;font-size:11.7px;color:#d4d4d2;font-weight:400;letter-spacing:-0.176px">Drive D: (CODEMETER)</div>
<div class="t" id="t28" style="left:790.80px;top:328.89px;font-size:11.7px;color:#d4d4d2;font-weight:400;letter-spacing:0.108px">latest_version.html</div>
<div class="t" id="t29" style="left:790.80px;top:348.44px;font-size:11.7px;color:#d4d4d2;font-weight:400;letter-spacing:0.216px">Log.txt</div>
<div class="t" id="t30" style="left:790.80px;top:367.99px;font-size:11.7px;color:#d4d4d2;font-weight:400;letter-spacing:0.352px">makeupload.bat</div>
<div class="t" id="t31" style="left:790.80px;top:387.54px;font-size:11.7px;color:#d4d4d2;font-weight:400;letter-spacing:0.224px">notes.txt</div>
<div class="t" id="t32" style="left:790.80px;top:407.09px;font-size:11.7px;color:#d4d4d2;font-weight:400;letter-spacing:0.086px">Process: 010Editor.exe (30296)</div>
<div class="t" id="t33" style="left:790.80px;top:426.64px;font-size:11.7px;color:#d4d4d2;font-weight:400;letter-spacing:0.245px">Project.htm</div>
<div class="t" id="t34" style="left:790.80px;top:446.19px;font-size:11.7px;color:#d4d4d2;font-weight:400;letter-spacing:0.254px">RCommon.php</div>
<div class="t" id="t35" style="left:790.80px;top:465.74px;font-size:11.7px;color:#d4d4d2;font-weight:400;letter-spacing:0.114px">Release - v16.html</div>
<div class="t" id="t36" style="left:790.80px;top:485.29px;font-size:11.7px;color:#d4d4d2;font-weight:400;letter-spacing:0.118px">Sample.zip</div>
<div class="t" id="t37" style="left:790.80px;top:504.84px;font-size:11.7px;color:#d4d4d2;font-weight:400;letter-spacing:0.520px">todo.txt</div>
<div class="t" id="t38" style="left:790.80px;top:524.39px;font-size:11.7px;color:#d4d4d2;font-weight:400;letter-spacing:0.442px">WAV.bt</div>
<div class="t" id="t39" style="left:781.51px;top:543.41px;font-size:11.5px;color:#f2f2f2;font-weight:700;letter-spacing:0.283px">Project</div>
</div></div>
</body></html>
